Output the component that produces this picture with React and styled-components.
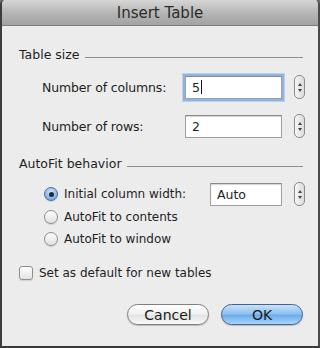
import React from "react";
import styled, { createGlobalStyle } from "styled-components";

const Global = createGlobalStyle`
  html, body {
    margin: 0;
    padding: 0;
    background: #6f6f6f;
  }
  body {
    font-family: "DejaVu Sans", "Liberation Sans", sans-serif;
    color: #1e1e1e;
  }
`;

const Window = styled.div`
  box-sizing: border-box;
  width: 320px;
  height: 348px;
  display: flex;
  flex-direction: column;
  background: #ececec;
  border-left: 2px solid #3c3c3c;
  border-right: 2px solid #4a4a4a;
  border-bottom: 2px solid #3a3a3a;
  border-radius: 5px 5px 0 0;
  overflow: hidden;
`;

const TitleBar = styled.div`
  height: 24px;
  flex: none;
  display: flex;
  align-items: center;
  justify-content: center;
  background: linear-gradient(#d6d6d6, #b4b4b4 55%, #a2a2a2);
  border-bottom: 1px solid #7b7b7b;
  font-size: 15px;
  color: #2c2c2c;
  padding-top: 1px;
`;

const Body = styled.div`
  flex: 1;
  display: flex;
  flex-direction: column;
  padding: 20px 15px 0 17px;
  font-size: 12px;
`;

const SectionHead = styled.div`
  display: flex;
  align-items: center;
  gap: 5px;
  height: 16px;
  font-size: 12.5px;
  margin-bottom: ${(p) => p.$gap || 0}px;

  &::after {
    content: "";
    flex: 1;
    height: 1px;
    margin-top: 6px;
    background: #8e8e8e;
  }
`;

const FieldGrid = styled.div`
  display: grid;
  grid-template-columns: ${(p) => p.$cols};
  align-items: center;
  column-gap: 12px;
  padding-left: ${(p) => p.$indent}px;
`;

const Label = styled.span`
  white-space: nowrap;
  font-size: 12.5px;
  letter-spacing: -0.15px;
`;

const Input = styled.div`
  box-sizing: border-box;
  height: 23px;
  background: #fff;
  border: 1px solid #a0a0a0;
  border-top-color: #8a8a8a;
  padding: 0 6px;
  display: flex;
  align-items: center;
  font-size: 12.5px;
  box-shadow: ${(p) =>
    p.$focus ? "0 0 0 2px #8fb3e2, 0 0 0 3px #b9d0ee" : "inset 0 1px 1px #d4d4d4"};
`;

const Caret = styled.span`
  display: inline-block;
  width: 1px;
  height: 14px;
  background: #111;
  margin-left: 1px;
`;

const StepBox = styled.div`
  box-sizing: border-box;
  width: 11px;
  height: 24px;
  border: 1px solid #8c8c8c;
  border-radius: 5px;
  background: linear-gradient(90deg, #f6f6f6, #dcdcdc);
  display: flex;
  flex-direction: column;
  align-items: center;
  justify-content: center;
  gap: 3px;
`;

const Tri = styled.span`
  width: 0;
  height: 0;
  border-left: 2.5px solid transparent;
  border-right: 2.5px solid transparent;
  ${(p) =>
    p.$down
      ? "border-top: 3px solid #444;"
      : "border-bottom: 3px solid #444;"}
`;

const Stepper = () => (
  <StepBox>
    <Tri />
    <Tri $down />
  </StepBox>
);

const Options = styled.div`
  display: flex;
  flex-direction: column;
  padding-left: 25px;
`;

const OptionRow = styled.label`
  display: flex;
  align-items: center;
  height: ${(p) => p.$h || 22}px;
  gap: 6px;
  font-size: 12px;
`;

const Radio = styled.span`
  box-sizing: border-box;
  width: 14px;
  height: 14px;
  border-radius: 50%;
  flex: none;
  display: flex;
  align-items: center;
  justify-content: center;
  border: 1px solid ${(p) => (p.$on ? "#4d6f9e" : "#8f8f8f")};
  background: ${(p) =>
    p.$on
      ? "radial-gradient(circle at 50% 35%, #d6e8fa, #7eaee2 70%, #5b8fd0)"
      : "linear-gradient(#fdfdfd, #e2e2e2)"};
  box-shadow: 0 1px 1px rgba(0, 0, 0, 0.12);

  &::after {
    content: "";
    display: ${(p) => (p.$on ? "block" : "none")};
    width: 5px;
    height: 5px;
    border-radius: 50%;
    background: #1c2a3a;
  }
`;

const Check = styled.span`
  box-sizing: border-box;
  width: 14px;
  height: 14px;
  flex: none;
  border: 1px solid #8f8f8f;
  border-radius: 3px;
  background: linear-gradient(#fdfdfd, #e4e4e4);
  box-shadow: 0 1px 1px rgba(0, 0, 0, 0.12);
`;

const Buttons = styled.div`
  display: flex;
  justify-content: flex-end;
  gap: 12px;
  margin-top: 20px;
`;

const Button = styled.div`
  box-sizing: border-box;
  width: 82px;
  height: 21px;
  border-radius: 11px;
  display: flex;
  align-items: center;
  justify-content: center;
  font-size: 14px;
  color: #1a1a1a;
  border: 1px solid ${(p) => (p.$primary ? "#46628a" : "#7e7e7e")};
  background: ${(p) =>
    p.$primary
      ? "linear-gradient(#c9e2fb, #8fc1f1 45%, #6eaced 55%, #a8d6fb)"
      : "linear-gradient(#ffffff, #f1f1f1 45%, #e3e3e3 55%, #fafafa)"};
  box-shadow: 0 1px 1px rgba(0, 0, 0, 0.2);
`;

export default function App() {
  return (
    <>
      <Global />
      <Window>
        <TitleBar>Insert Table</TitleBar>
        <Body>
          <SectionHead $gap={13}>Table size</SectionHead>
          <FieldGrid $indent={23} $cols="131px 97px 11px">
            <Label>Number of columns:</Label>
            <Input $focus>
              5<Caret />
            </Input>
            <Stepper />
          </FieldGrid>
          <FieldGrid $indent={23} $cols="131px 97px 11px" style={{ marginTop: 15 }}>
            <Label>Number of rows:</Label>
            <Input>2</Input>
            <Stepper />
          </FieldGrid>
          <SectionHead style={{ marginTop: 17 }} $gap={11}>
            AutoFit behavior
          </SectionHead>
          <Options>
            <FieldGrid $indent={0} $cols="154px 72px 11px">
              <OptionRow>
                <Radio $on />
                Initial column width:
              </OptionRow>
              <Input>Auto</Input>
              <Stepper />
            </FieldGrid>
            <OptionRow>
              <Radio />
              AutoFit to contents
            </OptionRow>
            <OptionRow>
              <Radio />
              AutoFit to window
            </OptionRow>
          </Options>
          <OptionRow style={{ marginTop: 12 }} $h={22}>
            <Check />
            Set as default for new tables
          </OptionRow>
          <Buttons>
            <Button>Cancel</Button>
            <Button $primary>OK</Button>
          </Buttons>
        </Body>
      </Window>
    </>
  );
}
